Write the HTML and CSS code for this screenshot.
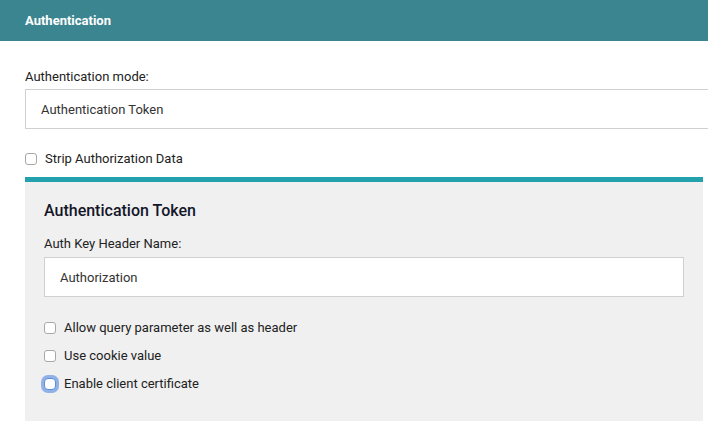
FILE: index.html
```html
<!DOCTYPE html>
<html>
<head>
<meta charset="utf-8">
<link rel="stylesheet" href="styles.css">
</head>
<body>
<div class="header">Authentication</div>
<div class="content">
  <div class="label">Authentication mode:</div>
  <div class="field field-wide">Authentication Token</div>
  <label class="check top-check"><input type="checkbox" class="cb"><span>Strip Authorization Data</span></label>
  <div class="panel">
    <div class="panel-title">Authentication Token</div>
    <div class="label panel-label">Auth Key Header Name:</div>
    <div class="field">Authorization</div>
    <div class="checks">
      <label class="check"><input type="checkbox" class="cb"><span>Allow query parameter as well as header</span></label>
      <label class="check"><input type="checkbox" class="cb"><span>Use cookie value</span></label>
      <label class="check"><input type="checkbox" class="cb cb-focus"><span>Enable client certificate</span></label>
    </div>
  </div>
</div>
</body>
</html>
```

FILE: styles.css
```css
html, body {
  margin: 0;
  padding: 0;
  overflow: hidden;
  background: #ffffff;
  font-family: Roboto, "Liberation Sans", sans-serif;
  font-size: 13px;
  color: #222;
}
.header {
  background: #3b8590;
  color: #ffffff;
  font-weight: 700;
  font-size: 13px;
  line-height: 15px;
  padding: 13px 25px 13px;
  height: 15px;
}
.content {
  padding: 28px 5px 0 25px;
}
.label {
  line-height: 15px;
  color: #222;
}
.field {
  margin-top: 5px;
  height: 38px;
  border: 1px solid #d0d0d0;
  background: #fff;
  padding: 1px 15px 0;
  box-sizing: content-box;
  display: flex;
  align-items: center;
  color: #333;
  line-height: 15px;
}
.field-wide {
  height: 37px;
  margin-right: -20px;
}
.check {
  display: flex;
  align-items: center;
  line-height: 15px;
  gap: 8px;
  color: #222;
}
.top-check {
  margin-top: 22px;
}
.cb {
  appearance: none;
  -webkit-appearance: none;
  margin: 0;
  width: 12px;
  height: 12px;
  border: 1px solid #a8a8a8;
  border-radius: 3px;
  background: #fff;
  flex: none;
}
.cb-focus {
  border-color: #5b8fd8;
  border-radius: 4px;
  box-shadow: 0 0 0 3px rgba(105, 150, 225, 0.7);
}
.panel {
  margin-top: 11px;
  border-top: 5px solid #23a1ac;
  background: #f0f0f0;
  padding: 19px 19px 30px;
}
.panel-title {
  font-size: 16px;
  font-weight: 500;
  line-height: 20px;
  color: #14162a;
}
.panel-label {
  margin-top: 15px;
}
.panel .field {
  height: 37px;
  margin-top: 6px;
}
.checks {
  margin-top: 23px;
  display: flex;
  flex-direction: column;
  gap: 13px;
}
```
